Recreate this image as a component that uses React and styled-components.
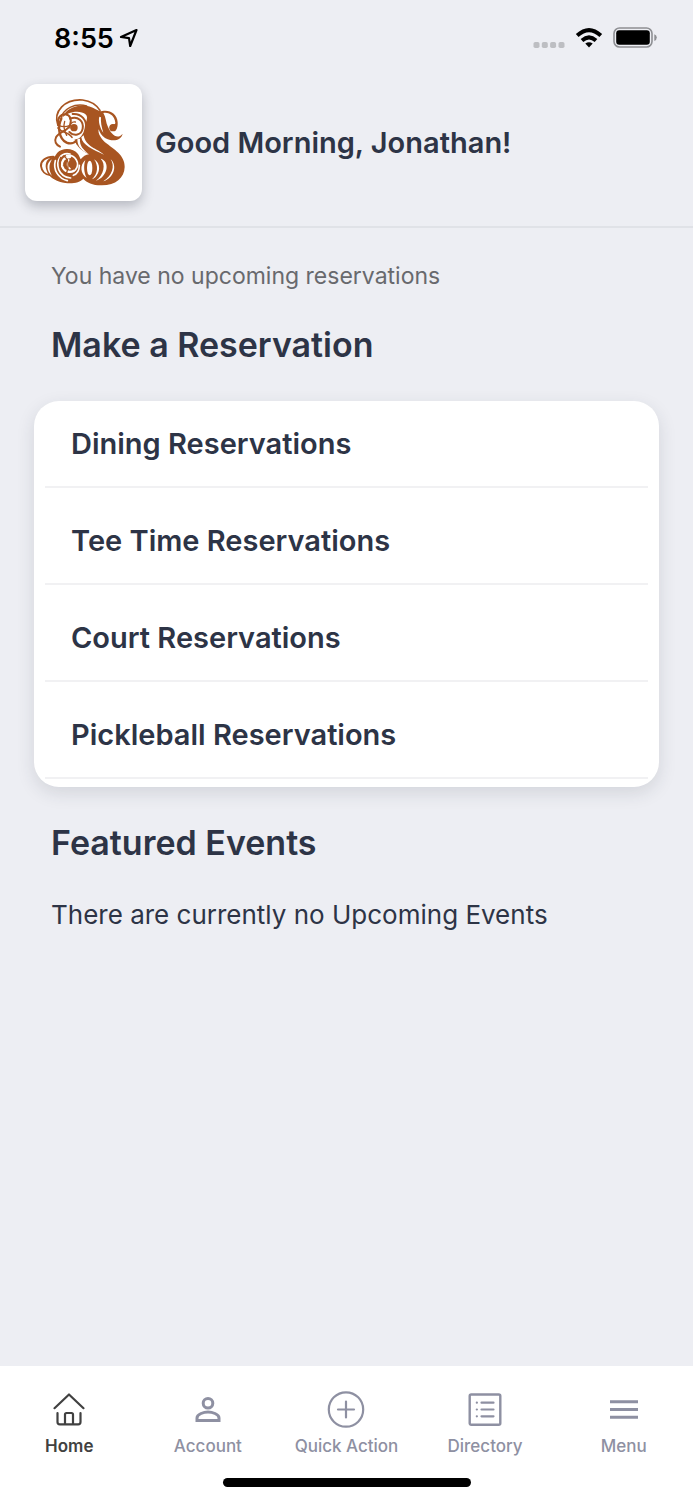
import React from "react";
import styled, { createGlobalStyle } from "styled-components";

const GlobalStyle = createGlobalStyle`
  *, *::before, *::after { box-sizing: border-box; }
  body {
    margin: 0;
    background: #edeef3;
    color: #2d3446;
    font-family: Inter, "Liberation Sans", sans-serif;
  }
  h1, h2, p, ul { margin: 0; padding: 0; font-weight: 400; }
`;

const Screen = styled.div`
  display: flex;
  flex-direction: column;
  min-height: 100vh;
`;

const StatusBar = styled.div`
  display: flex;
  justify-content: space-between;
  align-items: center;
  height: 76px;
  padding: 0 36px 0 54px;
  color: #000;
`;

const StatusGroup = styled.div`
  display: flex;
  align-items: center;
  gap: ${(p) => p.$gap}px;
`;

const Clock = styled.time`
  padding-top: 2px;
  font-size: 27px;
  line-height: 32px;
  font-weight: 600;
`;

const Header = styled.header`
  display: flex;
  align-items: center;
  gap: 13px;
  padding: 8px 25px 25px;
  border-bottom: 2px solid #e0e2e7;
`;

const LogoCard = styled.div`
  display: flex;
  width: 117px;
  height: 117px;
  border-radius: 12px;
  background: #fff;
  box-shadow: 0 5px 12px rgba(40, 45, 60, 0.28);
`;

const Greeting = styled.h1`
  font-size: 29px;
  line-height: 36px;
  font-weight: 600;
`;

const Main = styled.main`
  flex: 1;
  padding: 32px 34px;
`;

const Note = styled.p`
  padding: 0 17px;
  font-size: ${(p) => (p.$muted ? 23 : 26)}px;
  line-height: 32px;
  color: ${(p) => (p.$muted ? "#68696d" : "#2d3446")};
`;

const SectionTitle = styled.h2`
  padding: 32px 17px 35px;
  font-size: 34px;
  line-height: 42px;
  font-weight: 600;
`;

const OptionList = styled.ul`
  display: flex;
  flex-direction: column;
  gap: 10px;
  margin-bottom: 3px;
  padding: 0 11px 8px;
  list-style: none;
  border-radius: 25px;
  background: #fff;
  box-shadow: 0 6px 18px rgba(40, 45, 60, 0.13);
`;

const OptionItem = styled.li`
  border-bottom: 2px solid #f1f1f3;
`;

const Option = styled.button`
  display: block;
  width: 100%;
  height: 85px;
  padding: 0 26px;
  border: 0;
  background: none;
  color: inherit;
  font: 600 29px/36px Inter, "Liberation Sans", sans-serif;
  text-align: left;
  cursor: pointer;
`;

const TabBar = styled.footer`
  padding: 20px 0 13px;
  background: #fff;
`;

const Tabs = styled.nav`
  display: grid;
  grid-template-columns: repeat(5, 1fr);
`;

const Tab = styled.a`
  display: flex;
  flex-direction: column;
  align-items: center;
  color: ${(p) => (p.$active ? "#414141" : "#8e90a2")};
  font-size: 17px;
  line-height: 24px;
  font-weight: ${(p) => (p.$active ? 600 : 500)};
  text-decoration: none;
  white-space: nowrap;
`;

const HomeIndicator = styled.div`
  width: 248px;
  height: 9px;
  margin: 20px auto 0;
  border-radius: 5px;
  background: #000;
`;

const LocationIcon = () => (
  <svg width="20" height="20" viewBox="0 0 20 20" fill="none" stroke="#000" strokeWidth="2.2" strokeLinejoin="round" aria-hidden="true">
    <path d="M17.5 2 2 9l8 1.2L11.2 18z" />
  </svg>
);

const SignalIcon = () => (
  <svg width="32" height="20" viewBox="0 0 32 20" fill="#bdbec2" aria-hidden="true">
    {[0, 8.3, 16.6, 25].map((x) => (
      <rect key={x} x={x + 0.5} y="14" width="6" height="6" rx="1.8" />
    ))}
  </svg>
);

const WifiIcon = () => (
  <svg width="28" height="20" viewBox="0 0 28 20" fill="none" stroke="#000" strokeWidth="4" aria-hidden="true">
    <path d="M2.2 7.6Q14-3.2 25.8 7.6" />
    <path d="M7 12.4q7-6.2 14 0" />
    <path d="M10.3 15.6q3.7-2.9 7.4 0L14 19.6z" fill="#000" stroke="none" />
  </svg>
);

const BatteryIcon = () => (
  <svg width="44" height="22" viewBox="0 0 44 22" aria-hidden="true">
    <rect x="1" y="1" width="38" height="19" rx="5.5" fill="none" stroke="#8e8f93" strokeWidth="1.6" />
    <rect x="3.2" y="3.2" width="33.6" height="14.6" rx="3" />
    <path d="M41.3 7.2q2.5 1 2.5 3.4t-2.5 3.4z" fill="#8e8f93" />
  </svg>
);

const Logo = () => (
  <svg width="117" height="117" viewBox="15 18 351 351" fill="none" strokeLinecap="round" role="img" aria-label="Club monogram">
    <g fill="#a85521">
      <path d="M124 122C136 92 172 77 202 84C222 87 235 102 247 99C268 94 292 107 293 133C294 151 288 159 278 159C266 157 266 142 276 140C282 138 286 139 286 134C284 116 270 102 250 105C258 118 257 133 264 147C273 168 291 187 308 167C303 189 277 192 255 180C244 173 240 164 236 154C233 166 243 182 255 193C282 214 315 232 314 267C313 300 286 323 243 322C218 322 200 314 190 302C180 313 160 318 136 315C112 312 92 302 82 282C92 270 98 240 112 224C128 208 160 210 174 228C179 236 180 240 182 244C188 236 198 230 207 229C192 222 166 206 164 184C178 186 190 172 194 150C196 132 206 120 198 110C178 94 142 102 124 122Z" />
      <path d="M112 235C84 236 74 252 78 272C84 294 100 304 120 308C96 290 88 262 112 235Z" />
    </g>
    <g stroke="#a85521">
      <path d="M100 236C76 236 62 250 63 264C65 280 76 290 90 291" strokeWidth="6" />
      <path d="M114 142C98 100 135 62 188 66C212 69 229 80 240 97" strokeWidth="5" />
      <path d="M122 124C128 92 165 74 200 84" strokeWidth="4" />
      <path d="M114 140C112 118 122 108 136 109C152 111 156 126 150 142C142 160 118 160 108 178C102 190 108 200 120 206" strokeWidth="6" />
      <path d="M124 122C112 146 116 182 140 194C154 200 164 194 172 186" strokeWidth="7" />
      <path d="M116 142Q132 150 150 142M134 130Q128 150 140 172" strokeWidth="4" />
      <path d="M114 150C124 164 146 162 156 178" strokeWidth="5" />
      <path d="M150 122C174 112 192 130 188 152C184 172 162 176 148 162" strokeWidth="6" />
      <path d="M150 150C148 138 156 130 166 132" strokeWidth="4" />
      <path d="M158 108C184 106 202 126 198 154C194 176 184 188 172 196" strokeWidth="6" />
    </g>
    <circle cx="162" cy="149" r="11" fill="#a85521" />
    <circle cx="279" cy="149" r="11" fill="#a85521" />
    <g fill="#fff">
      <path d="M172 184C172 206 186 220 206 228C190 214 178 204 180 182Z" />
      <path d="M184 178C186 200 220 216 252 230C232 212 196 206 191 172Z" />
      <path d="M238 116C234 130 240 150 250 164C244 146 242 132 243 118Z" />
      <path d="M242 242C258 258 252 290 228 308C250 302 268 274 256 252C252 246 246 242 242 242Z" />
      <path d="M272 244C286 264 276 294 250 310C280 302 294 264 272 244Z" />
      <path d="M222 244C236 262 234 288 216 304C230 300 244 276 234 256Q230 248 222 244Z" />
      <ellipse cx="209" cy="270" rx="8" ry="22" />
      <path d="M196 246C178 262 182 288 200 300C192 284 190 264 196 246Z" />
      <path d="M96 244C76 256 80 280 96 294C86 276 86 260 96 244Z" />
    </g>
    <g stroke="#fff">
      <path d="M150 228C120 222 108 250 116 274C122 290 136 298 152 300" strokeWidth="5" />
      <path d="M150 237C132 237 124 250 126 264C130 280 150 286 162 278" strokeWidth="7" />
      <path d="M140 233C166 228 182 256 166 276" strokeWidth="5" />
      <path d="M106 248C98 276 116 302 142 308" strokeWidth="5" />
      <path d="M178 262C178 276 172 288 160 292" strokeWidth="5" />
      <path d="M146 246C140 256 142 268 150 272" strokeWidth="5" />
    </g>
    <g stroke="#a85521" strokeWidth="4">
      <path d="M122 238C112 262 124 284 150 292" />
      <path d="M130 234Q154 246 138 290" />
    </g>
  </svg>
);

const TabIcon = ({ children }) => (
  <svg width="38" height="48" viewBox="0 0 38 48" fill="none" stroke="currentColor" strokeWidth="2.2" strokeLinecap="round" strokeLinejoin="round" aria-hidden="true">
    {children}
  </svg>
);

const tabs = [
  {
    label: "Home",
    icon: <path d="M4.5 22.2 19 8.5l14.5 13.7M7.5 27v9q0 2.3 2.3 2.3h18.4q2.3 0 2.3-2.3v-9M15 38V28.5q0-1.5 1.5-1.5h5q1.5 0 1.5 1.5V38" />,
  },
  {
    label: "Account",
    icon: (
      <g strokeWidth="3" strokeLinejoin="miter">
        <circle cx="19" cy="17.2" r="4.8" />
        <path d="M8 34.6V32c0-4 7-6 11-6s11 2 11 6v2.6z" />
      </g>
    ),
  },
  {
    label: "Quick Action",
    icon: (
      <>
        <circle cx="19" cy="23.5" r="17.2" />
        <path d="M19 15.5v16M11 23.5h16" />
      </>
    ),
  },
  {
    label: "Directory",
    icon: (
      <>
        <rect x="3.7" y="8.5" width="30.6" height="30.3" rx="1.5" strokeWidth="2.4" />
        <path d="M15.5 16.7h12M15.5 23.5h12M15.5 30.3h12M10.8 16.7h.1M10.8 23.5h.1M10.8 30.3h.1" />
      </>
    ),
  },
  {
    label: "Menu",
    icon: <path d="M5 15.7h28M5 23.5h28M5 31.2h28" strokeWidth="2.9" strokeLinecap="butt" />,
  },
];

const options = [
  "Dining Reservations",
  "Tee Time Reservations",
  "Court Reservations",
  "Pickleball Reservations",
];

export default function App() {
  return (
    <>
      <GlobalStyle />
      <Screen>
        <StatusBar>
          <StatusGroup $gap={5}>
            <Clock>8:55</Clock>
            <LocationIcon />
          </StatusGroup>
          <StatusGroup $gap={10}>
            <SignalIcon />
            <WifiIcon />
            <BatteryIcon />
          </StatusGroup>
        </StatusBar>
        <Header>
          <LogoCard>
            <Logo />
          </LogoCard>
          <Greeting>Good Morning, Jonathan!</Greeting>
        </Header>
        <Main>
          <Note $muted>You have no upcoming reservations</Note>
          <SectionTitle>Make a Reservation</SectionTitle>
          <OptionList>
            {options.map((label) => (
              <OptionItem key={label}>
                <Option type="button">{label}</Option>
              </OptionItem>
            ))}
          </OptionList>
          <SectionTitle>Featured Events</SectionTitle>
          <Note>There are currently no Upcoming Events</Note>
        </Main>
        <TabBar>
          <Tabs>
            {tabs.map(({ label, icon }, i) => (
              <Tab key={label} href={"#" + label.toLowerCase().replace(" ", "-")} $active={i === 0}>
                <TabIcon>{icon}</TabIcon>
                {label}
              </Tab>
            ))}
          </Tabs>
          <HomeIndicator />
        </TabBar>
      </Screen>
    </>
  );
}
